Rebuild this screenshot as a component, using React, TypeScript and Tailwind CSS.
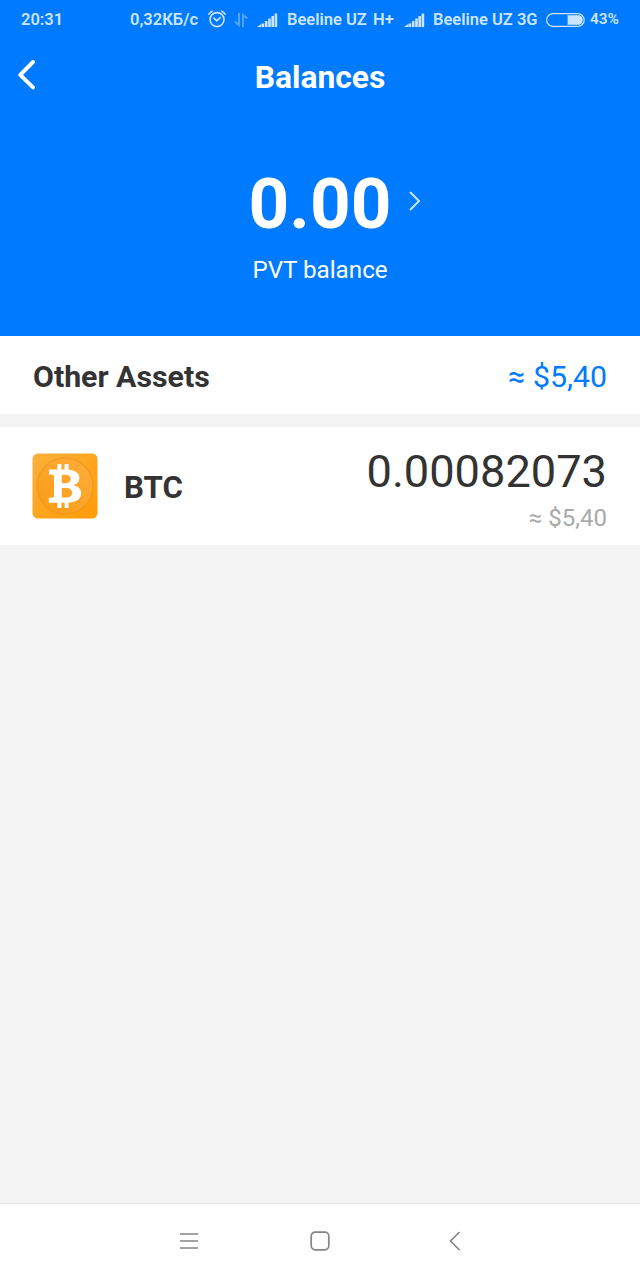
import type { ReactNode } from "react";

interface Asset {
  symbol: string;
  amount: string;
  value: string;
}

const assets: Asset[] = [
  { symbol: "BTC", amount: "0.00082073", value: "≈ $5,40" },
];

function SignalIcon() {
  return (
    <svg width="21" height="14" viewBox="0 0 21 14" fill="currentColor">
      <path d="M0 14L4.2 11V14zM4.6 10.5H7.2V14H4.6zM7.9 8H10.5V14H7.9zM11.2 5.5H13.8V14H11.2zM14.4 3H17V14H14.4zM17.6 .5H20.2V14H17.6z" />
    </svg>
  );
}

function AlarmIcon() {
  return (
    <svg
      width="18"
      height="18"
      viewBox="0 0 18 18"
      fill="none"
      stroke="currentColor"
      strokeWidth="1.6"
      strokeLinecap="round"
      strokeLinejoin="round"
    >
      <circle cx="9" cy="9.6" r="7" />
      <path d="M.9 4.2A8 8 0 0 1 4.2 1.2M13.8 1.2A8 8 0 0 1 17.1 4.2M6 8.2L8.8 10.8L12.2 7.6" />
    </svg>
  );
}

function DataIcon() {
  return (
    <svg
      width="14"
      height="14"
      viewBox="0 0 14 14"
      fill="none"
      stroke="currentColor"
      strokeWidth="2"
      className="opacity-40"
    >
      <path d="M5 0V12L.8 8.6M9 14V2L13.2 5.4" />
    </svg>
  );
}

function BatteryIcon() {
  return (
    <svg width="39" height="14" viewBox="0 0 39 14" fill="none">
      <rect x=".6" y=".6" width="37.6" height="12.8" rx="6.4" stroke="currentColor" strokeWidth="1.2" />
      <path d="M21.6 2.2H32A4.8 4.8 0 0 1 32 11.8H21.6z" fill="currentColor" />
    </svg>
  );
}

function BitcoinIcon() {
  return (
    <svg width="66" height="66" viewBox="0 0 66 66">
      <defs>
        <linearGradient id="tile" x1="0" y1="0" x2="1" y2="1">
          <stop offset="0" stopColor="#fbb03b" />
          <stop offset="1" stopColor="#ff9b05" />
        </linearGradient>
        <linearGradient id="coin" x1="1" y1="0" x2="0" y2="1">
          <stop offset="0" stopColor="#ffad3c" />
          <stop offset="1" stopColor="#f99c14" />
        </linearGradient>
      </defs>
      <rect x=".5" y=".5" width="65" height="65" rx="5.5" fill="url(#tile)" />
      <circle cx="33" cy="33" r="28" fill="url(#coin)" stroke="#e9931b" strokeWidth="1.6" strokeOpacity=".5" />
      <path
        fill="#fff"
        fillRule="evenodd"
        d="M17 16.5H25.5V11H29.4V16.5H32.6V11H36.6V16.8C43 17.3 47.4 20.1 47.4 25C47.4 28.8 45 31 41.5 32.2C46 33 49.2 35.8 49.2 40.2C49.2 46 44.4 49 36.6 49.6V55H32.6V49.8H29.4V55H25.5V49.8H16.8V44.8H19.4C21.2 44.8 22 44 22 42.4V23.8C22 22.2 21.2 21.5 19.4 21.5H17zM29.8 21.8V30.2H33.2C36.6 30.2 38.7 28.8 38.7 26C38.7 23.2 36.8 21.8 33.5 21.8zM29.8 35V44.6H33.8C37.8 44.6 40 43 40 39.7C40 36.6 37.8 35 33.8 35z"
      />
    </svg>
  );
}

function StatusBar() {
  return (
    <div className="flex h-10 items-center text-[16.5px] font-semibold whitespace-nowrap text-[#cce5ff]">
      <span className="ml-[21px] w-[109px]">20:31</span>
      <span className="w-[78px]">0,32КБ/с</span>
      <span className="w-[26px] pb-0.5"><AlarmIcon /></span>
      <span className="w-[23px]"><DataIcon /></span>
      <span className="w-[30px]"><SignalIcon /></span>
      <span className="w-[86px]">Beeline UZ</span>
      <span className="w-[31px]">H+</span>
      <span className="w-[29px]"><SignalIcon /></span>
      <span className="w-[113px]">Beeline UZ 3G</span>
      <span className="w-[44px] pb-px"><BatteryIcon /></span>
      <span className="text-[15.4px]">43%</span>
    </div>
  );
}

function NavButton({ label, children }: { label: string; children: ReactNode }) {
  return (
    <button
      aria-label={label}
      className="flex h-full w-[133px] items-center justify-center pb-0.5 text-[#858585]"
    >
      {children}
    </button>
  );
}

export default function App() {
  return (
    <div className="flex h-[1280px] w-[640px] flex-col overflow-hidden bg-[#f3f3f3] font-[Roboto,sans-serif] text-[#333]">
      <header className="h-[336px] bg-[#007aff] text-white">
        <StatusBar />

        <div className="grid h-[74px] grid-cols-[64px_1fr_64px] items-center">
          <button aria-label="Back" className="pb-1 pl-[17px]">
            <svg width="20" height="32" viewBox="0 0 20 32" fill="none" stroke="currentColor" strokeWidth="3.9" strokeLinecap="round" strokeLinejoin="round">
              <path d="M16 3L3.2 15.8L16 28.4" />
            </svg>
          </button>
          <h1 className="text-center text-[31.8px] leading-9 font-bold">Balances</h1>
        </div>

        <div className="grid grid-cols-[1fr_auto_1fr] items-center pt-[50px]">
          <span />
          <span className="text-[71px] leading-[80px] font-bold">0.00</span>
          <svg width="14" height="22" viewBox="0 0 14 22" fill="none" stroke="#cce5ff" strokeWidth="2" className="mb-1.5 ml-[17px]">
            <path d="M2 2L11 11L2 20" />
          </svg>
        </div>
        <p className="pt-3 text-center text-[24.2px] leading-7">PVT balance</p>
      </header>

      <section className="flex h-[78px] items-center justify-between bg-white px-[33px] pt-[3px]">
        <h2 className="text-[30.3px] font-bold">Other Assets</h2>
        <span className="text-[30.3px] text-[#007aff]">≈ $5,40</span>
      </section>

      <ul className="mt-[13px]">
        {assets.map((asset) => (
          <li key={asset.symbol} className="flex h-[118px] items-center bg-white pr-[33px] pl-8">
            <BitcoinIcon />
            <span className="ml-[26px] pt-1 text-[31.2px] font-bold">{asset.symbol}</span>
            <div className="ml-auto pt-[7px] text-right">
              <p className="text-[45.2px] leading-[52px]">{asset.amount}</p>
              <p className="mt-1 text-[24px] leading-8 text-[#aaa]">{asset.value}</p>
            </div>
          </li>
        ))}
      </ul>

      <nav className="mt-auto flex h-[77px] justify-center border-t border-[#e6e6e6] bg-white">
        <NavButton label="Menu">
          <svg width="18" height="18" viewBox="0 0 18 18" stroke="currentColor" strokeWidth="1.6" className="ml-[3px]">
            <path d="M0 2H18M0 9H18M0 16H18" />
          </svg>
        </NavButton>
        <NavButton label="Home">
          <svg width="20" height="20" viewBox="0 0 20 20" fill="none" stroke="currentColor" strokeWidth="1.7">
            <rect x="1.2" y="1.2" width="17.6" height="17.6" rx="4" />
          </svg>
        </NavButton>
        <NavButton label="Back">
          <svg width="12" height="20" viewBox="0 0 12 20" fill="none" stroke="currentColor" strokeWidth="1.7" className="ml-[3px]">
            <path d="M10.5 1L1.5 10L10.5 19" />
          </svg>
        </NavButton>
      </nav>
    </div>
  );
}
